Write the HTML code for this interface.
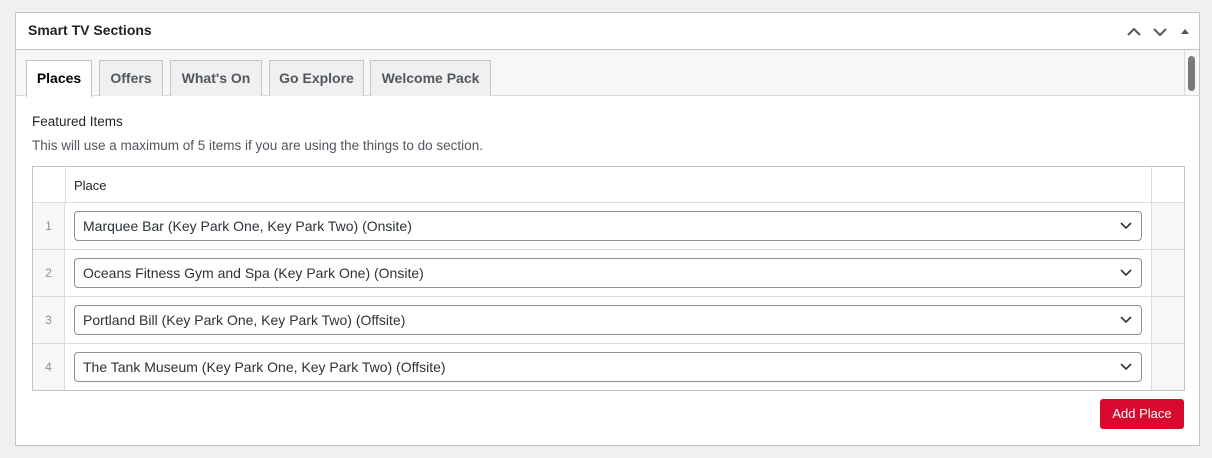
<!DOCTYPE html>
<html><head><style>
*{box-sizing:border-box;margin:0;padding:0}
body{width:1212px;height:458px;background:#f0f0f1;font-family:"Liberation Sans",sans-serif;color:#1d2327;position:relative;overflow:hidden}
.a{position:absolute}
.panel{left:15px;top:12px;width:1185px;height:434px;background:#fff;border:1px solid #c3c4c7}
.tab{position:absolute;top:60px;height:36px;border:1px solid #c3c4c7;border-bottom:none;background:#f0f0f1;font-size:14px;font-weight:bold;color:#50575e;text-align:center;line-height:34px}
.row{position:absolute;left:33px;width:1151px;height:47px;border-top:1px solid #dcdcde}
.num{position:absolute;left:0;top:0;width:32px;height:46px;background:#f6f7f7;border-right:1px solid #dcdcde;color:#8c8f94;font-size:12px;text-align:center;line-height:46px}
.rc{position:absolute;right:0;top:0;width:33px;height:46px;background:#f6f7f7;border-left:1px solid #dcdcde}
.sel{position:absolute;left:41px;top:8px;width:1068px;height:30px;border:1px solid #8c8f94;border-radius:4px;font-size:14px;line-height:29px;padding-left:8px;color:#2c3338}
.sel svg{position:absolute;right:9px;top:10px}
</style></head><body>
<div class="a panel"></div>
<div class="a" style="left:28px;top:22px;font-size:14px;font-weight:bold">Smart TV Sections</div>
<svg class="a" style="left:1126px;top:24px" width="70" height="14"><path d="M2 11 L8 5 L14 11" stroke="#50575e" stroke-width="2" fill="none"/><path d="M28 5 L34 11 L40 5" stroke="#50575e" stroke-width="2" fill="none"/><path d="M55 10 L59 5 L63 10Z" fill="#50575e"/></svg>
<div class="a" style="left:16px;top:49px;width:1183px;height:47px;background:#f6f7f7;border-top:1px solid #c3c4c7;border-bottom:1px solid #dcdcde"></div>
<div class="a" style="left:1184px;top:50px;width:1px;height:45px;background:#dcdcde"></div>
<div class="a" style="left:1188px;top:56px;width:7px;height:35px;background:#7a7a7a;border-radius:4px"></div>
<div class="tab" style="left:26px;width:66px;background:#fff;color:#000;height:37px">Places</div>
<div class="tab" style="left:99px;width:64px">Offers</div>
<div class="tab" style="left:170px;width:92px">What's On</div>
<div class="tab" style="left:269px;width:95px">Go Explore</div>
<div class="tab" style="left:370px;width:121px">Welcome Pack</div>
<div class="a" style="left:32px;top:114px;font-size:13.5px;color:#1d2327">Featured Items</div>
<div class="a" style="left:32px;top:138px;font-size:13.5px;color:#50575e">This will use a maximum of 5 items if you are using the things to do section.</div>
<div class="a" style="left:32px;top:166px;width:1153px;height:225px;border:1px solid #c3c4c7"></div>
<div class="a" style="left:65px;top:167px;width:1px;height:35px;background:#dcdcde"></div>
<div class="a" style="left:1151px;top:167px;width:1px;height:35px;background:#dcdcde"></div>
<div class="a" style="left:74px;top:178px;font-size:13px">Place</div>
<div class="row" style="top:202px"><div class="num">1</div><div class="rc"></div><div class="sel">Marquee Bar (Key Park One, Key Park Two) (Onsite)<svg width="12" height="8"><path d="M1 1L6 6L11 1" stroke="#2c3338" stroke-width="1.6" fill="none"/></svg></div></div>
<div class="row" style="top:249px"><div class="num">2</div><div class="rc"></div><div class="sel">Oceans Fitness Gym and Spa (Key Park One) (Onsite)<svg width="12" height="8"><path d="M1 1L6 6L11 1" stroke="#2c3338" stroke-width="1.6" fill="none"/></svg></div></div>
<div class="row" style="top:296px"><div class="num">3</div><div class="rc"></div><div class="sel">Portland Bill (Key Park One, Key Park Two) (Offsite)<svg width="12" height="8"><path d="M1 1L6 6L11 1" stroke="#2c3338" stroke-width="1.6" fill="none"/></svg></div></div>
<div class="row" style="top:343px"><div class="num">4</div><div class="rc"></div><div class="sel">The Tank Museum (Key Park One, Key Park Two) (Offsite)<svg width="12" height="8"><path d="M1 1L6 6L11 1" stroke="#2c3338" stroke-width="1.6" fill="none"/></svg></div></div>
<div class="a" style="left:1100px;top:399px;width:84px;height:30px;background:#d7092f;border-radius:3px;color:#fff;font-size:13px;text-align:center;line-height:30px">Add Place</div>
</body></html>
